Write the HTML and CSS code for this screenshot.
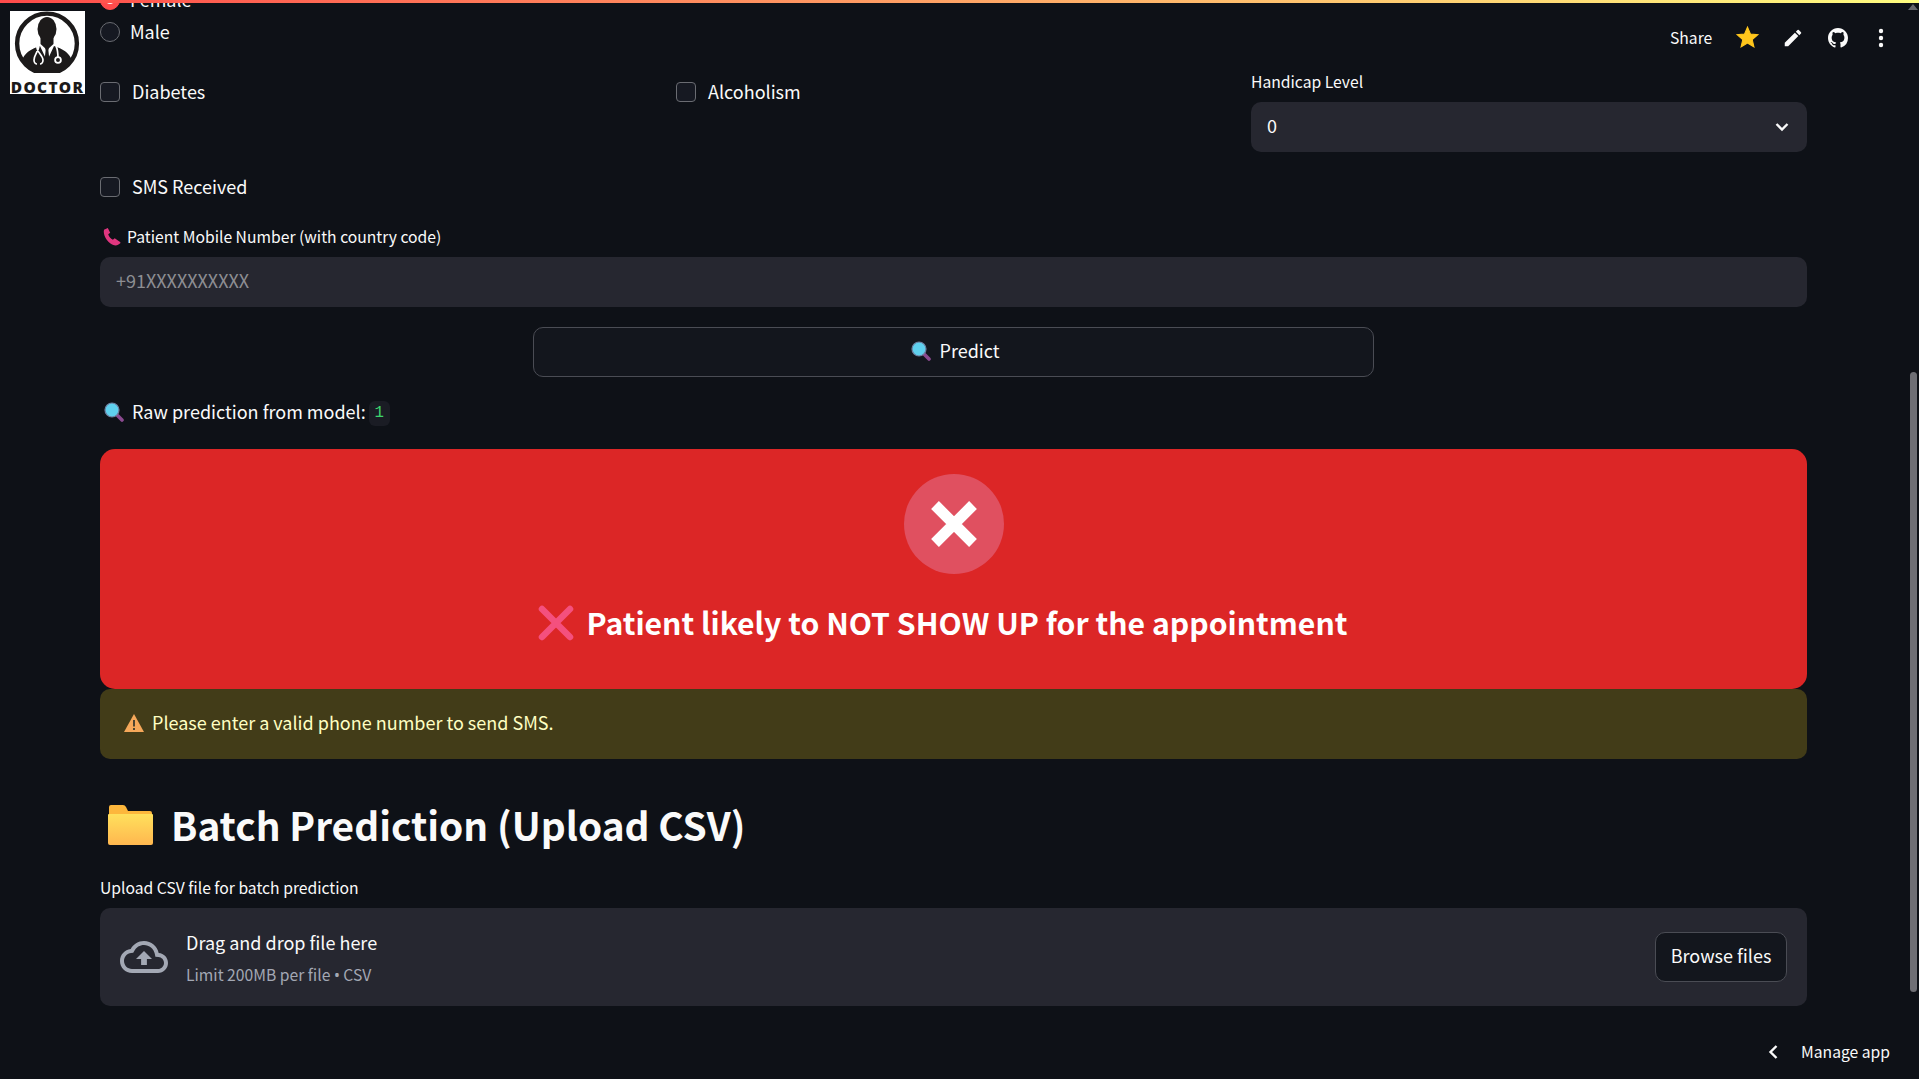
FILE: index.html
```html
<!DOCTYPE html>
<html lang="en">
<head>
<meta charset="utf-8">
<title>Doctor appointment no-show prediction</title>
<link rel="stylesheet" href="styles.css">
</head>
<body>
<div class="decoration"></div>

<main class="main">
  <div class="radio-group">
    <div class="radio-row"><span class="radio radio-on"><span class="radio-dot"></span></span><span class="opt-text">Female</span></div>
    <div class="radio-row"><span class="radio"></span><span class="opt-text">Male</span></div>
  </div>

  <div class="columns">
    <div class="col-check"><label class="check"><span class="box"></span><span class="check-text">Diabetes</span></label></div>
    <div class="col-check"><label class="check"><span class="box"></span><span class="check-text">Alcoholism</span></label></div>
    <div class="col-select">
      <div class="label">Handicap Level</div>
      <div class="select"><span>0</span>
        <svg class="chev" viewBox="0 0 14 10" width="14" height="10"><path d="M1.500 2 7 7.500 12.500 2" fill="none" stroke="#fafafa" stroke-width="2.400"/></svg>
      </div>
    </div>
  </div>

  <label class="check sms"><span class="box"></span><span class="check-text">SMS Received</span></label>

  <div class="label phone-label">
    <svg class="phone-ico" viewBox="0 0 18 18" width="18" height="18"><path d="M1 1.800 4.800 0l2.400 4.800-2 1.500c.8 2.300 2.400 4.300 4.700 5.500l1.800-1.600 5.400 3.700c.6.5.4 1.300-.2 1.700l-1.800 1.100c-1.300.9-3.200 1-4.800.3C6 15.200 1.900 10.700 1 5.800.7 4.400.7 3 1 1.800z" fill="#e0367f"/></svg>
    <span>Patient Mobile Number (with country code)</span>
  </div>
  <div class="input">+91XXXXXXXXXX</div>

  <button class="predict">
    <svg class="lens" viewBox="0 0 20 20" width="20" height="20"><path d="M12 12l6 6" stroke="#8a4a8f" stroke-width="3.600" stroke-linecap="round"/><circle cx="8" cy="8" r="7" fill="#5fd0ee" stroke="#6d7fa0" stroke-width="1.200"/></svg>
    <span>Predict</span>
  </button>

  <div class="raw">
    <svg class="lens" viewBox="0 0 20 20" width="20" height="20"><path d="M12 12l6 6" stroke="#8a4a8f" stroke-width="3.600" stroke-linecap="round"/><circle cx="8" cy="8" r="7" fill="#5fd0ee" stroke="#6d7fa0" stroke-width="1.200"/></svg>
    <span>Raw prediction from model:</span>
    <code class="chip">1</code>
  </div>

  <section class="result">
    <div class="result-circle">
      <svg viewBox="0 0 48 48" width="48" height="48"><path d="M5 5l38 38M43 5 5 43" stroke="#fff" stroke-width="11"/></svg>
    </div>
    <div class="result-title">
      <svg class="x-ico" viewBox="0 0 36 36" width="36" height="36"><path d="M4 4l28 28M32 4 4 32" stroke="#f4507e" stroke-width="6.500" stroke-linecap="round"/></svg>
      <span>Patient likely to NOT SHOW UP for the appointment</span>
    </div>
  </section>

  <div class="warning">
    <svg class="warn-ico" viewBox="0 0 20 18" width="20" height="18"><path d="M10 0 20 18H0z" fill="#f5a85a"/><path d="M10 6v6.500M10 14v2" stroke="#3c3a2e" stroke-width="1.800"/></svg>
    <span>Please enter a valid phone number to send SMS.</span>
  </div>

  <h2 class="batch">
    <svg class="folder" viewBox="0 0 45 40" width="45" height="40"><defs><linearGradient id="fg" x1="0" y1="0" x2="0" y2="1"><stop offset="0" stop-color="#ffe05c"/><stop offset="1" stop-color="#ffb74f"/></linearGradient></defs><path d="M1 2q0-2 2-2h12q2 0 3 2l2 4h22q2 0 2 2v4H1z" fill="#fdb73c"/><path d="M1 9h43q1 0 1 1v28q0 2-2 2H2q-2 0-2-2V10q0-1 1-1z" fill="url(#fg)"/></svg>
    <span>Batch Prediction (Upload CSV)</span>
  </h2>

  <div class="label upload-label">Upload CSV file for batch prediction</div>
  <div class="uploader">
    <svg class="cloud" viewBox="0 0 24 24" width="48" height="48"><path d="M19.350 10.040C18.670 6.590 15.640 4 12 4 9.110 4 6.600 5.640 5.350 8.040 2.340 8.360 0 10.910 0 14c0 3.310 2.690 6 6 6h13c2.760 0 5-2.240 5-5 0-2.640-2.050-4.780-4.650-4.960zM19 18H6c-2.210 0-4-1.790-4-4 0-2.050 1.530-3.760 3.560-3.970l1.070-.11.5-.95C8.080 7.140 9.940 6 12 6c2.620 0 4.880 1.860 5.390 4.430l.3 1.500 1.530.11c1.560.1 2.780 1.410 2.780 2.960 0 1.650-1.350 3-3 3zM8 13h2.550v3h2.900v-3H16l-4-4z" fill="#a3a8b4"/></svg>
    <div class="drop-text">
      <div class="drop-main">Drag and drop file here</div>
      <div class="drop-sub">Limit 200MB per file <span class="bullet">•</span> CSV</div>
    </div>
    <button class="browse">Browse files</button>
  </div>
</main>

<div class="logo">
  <svg viewBox="0 0 75 62" width="75" height="62">
    <defs><clipPath id="disc"><circle cx="37" cy="32.500" r="29"/></clipPath></defs>
    <circle cx="37" cy="32.500" r="29.700" fill="#fff"/>
    <g clip-path="url(#disc)">
      <path d="M10 62C10 43 19 39 30 35l7 15 7-15c11 4 20 8 20 27z" fill="#1c1a1a"/>
      <path d="M30.500 24h13v9l-6.500 6-6.500-6z" fill="#1c1a1a"/>
      <path d="M35.200 37h3.600l-.4 2.500 1.100 10-2.500 3-2.500-3 1.100-10z" fill="#1c1a1a"/>
      <path d="M29 35c-1 6-5 9-5 14 0 3 2 4 3 4M27 35c-1 6 6 9 6 14 0 3-2 4-3 4M46 35c2 4 2 9 2 13" fill="none" stroke="#fff" stroke-width="1.700"/>
      <circle cx="48" cy="49" r="2.900" fill="#1c1a1a" stroke="#fff" stroke-width="1.800"/>
    </g>
    <ellipse cx="37" cy="18" rx="9.500" ry="12" fill="#1c1a1a"/>
    <circle cx="37" cy="32.500" r="29.900" fill="none" stroke="#1c1a1a" stroke-width="4.400"/>
  </svg>
  <div class="logo-word">DOCTOR</div>
</div>

<div class="toolbar">
  <span class="share">Share</span>
  <svg viewBox="0 0 24 24" width="25" height="25"><path d="M12 17.270 18.180 21l-1.640-7.030L22 9.240l-7.190-.61L12 2 9.190 8.630 2 9.240l5.460 4.730L5.820 21z" fill="#ffc61c" stroke="#ffc61c"/></svg>
  <svg viewBox="0 0 24 24" width="22" height="22"><path d="M3 17.250V21h3.750L17.810 9.940l-3.750-3.750zM20.710 7.040a1 1 0 0 0 0-1.410l-2.340-2.340a1 1 0 0 0-1.410 0l-1.830 1.830 3.750 3.750z" fill="#fafafa"/></svg>
  <svg viewBox="0 0 16 16" width="20" height="20"><path d="M8 0C3.580 0 0 3.580 0 8c0 3.540 2.290 6.530 5.470 7.590.4.070.55-.17.55-.38 0-.19-.01-.82-.01-1.490-2.010.37-2.530-.49-2.690-.94-.09-.23-.48-.94-.82-1.130-.28-.15-.68-.52-.01-.53.63-.01 1.080.58 1.230.82.72 1.210 1.870.87 2.330.66.070-.52.280-.87.510-1.070-1.780-.2-3.640-.89-3.640-3.950 0-.87.310-1.590.820-2.150-.08-.2-.36-1.020.08-2.120 0 0 .67-.21 2.200.82.640-.18 1.320-.27 2-.27s1.360.09 2 .27c1.530-1.040 2.200-.82 2.200-.82.44 1.100.16 1.920.08 2.120.51.56.82 1.270.82 2.150 0 3.070-1.870 3.750-3.650 3.950.29.25.54.73.54 1.480 0 1.070-.01 1.930-.01 2.200 0 .21.15.46.55.38A8.010 8.010 0 0 0 16 8c0-4.420-3.580-8-8-8z" fill="#fafafa"/></svg>
  <svg viewBox="0 0 6 20" width="6" height="20"><circle cx="3" cy="3" r="2.200" fill="#fafafa"/><circle cx="3" cy="10" r="2.200" fill="#fafafa"/><circle cx="3" cy="17" r="2.200" fill="#fafafa"/></svg>
</div>

<div class="manage">
  <svg viewBox="0 0 12 16" width="12" height="16"><path d="M9.500 2 3.500 8l6 6" fill="none" stroke="#fafafa" stroke-width="2.400"/></svg>
  <span>Manage app</span>
</div>

<div class="scroll-arrow"></div>
<div class="scroll-thumb"></div>
</body>
</html>
```

FILE: styles.css
```css
* { box-sizing: border-box; }
html, body { margin: 0; height: 100%; }
body {
  background: #0e1117;
  color: #fafafa;
  font-family: "Noto Sans CJK SC", "Noto Sans", sans-serif;
  font-size: 18px;
  line-height: 1.3;
  overflow: hidden;
}
svg { display: block; flex: none; }

.decoration {
  position: absolute; top: 0; left: 0; right: 0; height: 3px; z-index: 5;
  background: linear-gradient(90deg, #ff4b4b, #fffd80);
}

.main {
  width: 1807px;
  height: 1095px;
  margin-top: -16px;
  padding-left: 100px;
}

.radio-group { display: flex; flex-direction: column; }
.radio-row { display: flex; align-items: center; gap: 10px; height: 32px; }
.radio {
  width: 20px; height: 20px; border-radius: 50%;
  border: 1px solid #6a6c72; background: #161922;
  display: flex; align-items: center; justify-content: center;
}
.radio-on { background: #ff4b4b; border-color: #ff4b4b; }
.radio-dot { width: 8px; height: 8px; border-radius: 50%; background: #fafafa; }
.opt-text { line-height: 26px; padding-bottom: 3px; }

.columns {
  display: grid;
  grid-template-columns: 560px 559px 1fr;
  gap: 16px;
  margin-top: 22px;
  height: 82px;
}
.check { display: flex; align-items: center; gap: 12px; height: 30px; }
.check-text { line-height: 28px; padding-bottom: 3px; }
.col-check { padding-top: 7px; }
.box {
  width: 20px; height: 20px; border-radius: 4px;
  border: 1px solid #6a6c72; background: #161922;
}
.col-select { display: flex; flex-direction: column; }
.label { font-size: 15.700px; line-height: 24px; }
.col-select .label { margin-bottom: 8px; }
.select {
  height: 50px; border-radius: 10px; background: #262730;
  display: flex; align-items: center; justify-content: space-between;
  padding: 0 18px 2px 16px;
}
.chev { margin-top: 2px; }

.sms { margin-top: 20px; }

.phone-label { display: flex; align-items: center; gap: 6px; margin-top: 23px; height: 24px; padding-left: 3px; margin-bottom: 8px; }
.input {
  height: 50px; border-radius: 10px; background: #262730;
  display: flex; align-items: center; padding: 0 16px 2px;
  color: #8d8e93;
}

.predict {
  display: flex; align-items: center; justify-content: center; gap: 8px;
  width: 841px; height: 50px; margin: 20px 0 0 433px; padding: 0 0 3px 4px;
  background: #13161d; color: #fafafa;
  border: 1px solid #4a4c54; border-radius: 10px;
  font: inherit;
}

.raw { display: flex; align-items: center; margin-top: 20px; height: 30px; padding-left: 4px; }
.raw .lens { margin-right: 8px; }
.chip {
  margin: 2px 0 0 3px; width: 21px; height: 25px; border-radius: 6px;
  background: #1a1c24; color: #3dd56d;
  font-family: "Liberation Mono", "DejaVu Sans Mono", monospace; font-size: 15.750px;
  display: flex; align-items: center; justify-content: center;
}

.result {
  margin-top: 22px; height: 240px; padding-top: 25px;
  background: #dc2626; border-radius: 15px;
  display: flex; flex-direction: column; align-items: center;
}
.result-circle {
  width: 100px; height: 100px; border-radius: 50%;
  background: #e05060;
  display: flex; align-items: center; justify-content: center;
}
.result-title {
  margin-top: 24px; height: 50px; padding-right: 22px;
  display: flex; align-items: center; gap: 13px;
  font-size: 30.200px; font-weight: 700; color: #fff;
}

.warning {
  height: 70px; border-radius: 10px; background: #423c18;
  color: #ffffc2;
  display: flex; align-items: center; gap: 8px; padding: 0 0 2px 24px;
}

.batch {
  margin: 43px 0 0 8px; height: 46px;
  display: flex; align-items: center; gap: 18px;
  font-size: 38.800px; font-weight: 700; color: #fafafa;
}
.batch span { padding-bottom: 2px; }

.upload-label { margin-top: 28px; margin-bottom: 8px; height: 24px; }
.uploader {
  height: 98px; border-radius: 10px; background: #262730;
  display: flex; align-items: center; padding: 0 20px;
}
.cloud { margin-right: 18px; }
.drop-text { flex: 1; display: flex; flex-direction: column; }
.drop-main { line-height: 30px; margin-top: -1px; }
.drop-sub { font-size: 15.700px; line-height: 24px; color: #a3a8b4; margin-top: 6px; }
.bullet { font-family: "Noto Sans", sans-serif; }
.browse {
  width: 132px; height: 50px; border-radius: 10px; padding-bottom: 4px;
  background: #13161d; color: #fafafa; border: 1px solid #4a4c54;
  font: inherit;
}

.logo {
  position: absolute; left: 10px; top: 11px; width: 75px; height: 83px;
  background: #fff;
}
.logo-word {
  margin-top: 9px; text-align: center; color: #1c1a1a;
  font-family: "Open Sans", sans-serif;
  font-size: 15.500px; font-weight: 800; line-height: 11px; letter-spacing: 1.300px;
  white-space: nowrap;
}

.toolbar {
  position: absolute; top: 25px; left: 1670px;
  display: flex; align-items: center; height: 25px;
}
.toolbar svg:nth-of-type(1) { margin-left: 23px; }
.toolbar svg:nth-of-type(2) { margin-left: 22px; }
.toolbar svg:nth-of-type(3) { margin-left: 24px; }
.toolbar svg:nth-of-type(4) { margin-left: 30px; }
.share { font-size: 15.700px; line-height: 25px; }

.manage {
  position: absolute; top: 1040px; left: 1767px;
  display: flex; align-items: center; gap: 22px; height: 24px;
  font-size: 15.700px; line-height: 24px;
}

.scroll-arrow {
  position: absolute; top: 4px; left: 1908px; width: 0; height: 0;
  border-left: 5px solid transparent; border-right: 5px solid transparent;
  border-bottom: 6px solid #66666b;
}
.scroll-thumb {
  position: absolute; top: 372px; left: 1910px; width: 7px; height: 620px;
  border-radius: 4px; background: #6f6f75;
}
```
